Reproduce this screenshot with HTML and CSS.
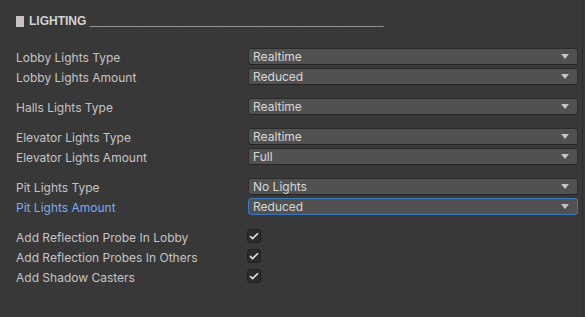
FILE: index.html
```html
<!DOCTYPE html>
<html>
<head>
    <title>Lighting</title>
    <link rel="stylesheet" href="styles.css">
</head>
<body>
    <div class="inspector">
        <div class="section-header">
            <span class="foldout"></span>
            <span class="section-title">LIGHTING ____________________________________________</span>
        </div>

        <div class="group">
            <div class="row">
                <label class="field-label">Lobby Lights Type</label>
                <div class="dropdown"><span>Realtime</span><span class="arrow"></span></div>
            </div>
            <div class="row">
                <label class="field-label">Lobby Lights Amount</label>
                <div class="dropdown"><span>Reduced</span><span class="arrow"></span></div>
            </div>
        </div>

        <div class="group">
            <div class="row">
                <label class="field-label">Halls Lights Type</label>
                <div class="dropdown"><span>Realtime</span><span class="arrow"></span></div>
            </div>
        </div>

        <div class="group">
            <div class="row">
                <label class="field-label">Elevator Lights Type</label>
                <div class="dropdown"><span>Realtime</span><span class="arrow"></span></div>
            </div>
            <div class="row">
                <label class="field-label">Elevator Lights Amount</label>
                <div class="dropdown"><span>Full</span><span class="arrow"></span></div>
            </div>
        </div>

        <div class="group">
            <div class="row">
                <label class="field-label">Pit Lights Type</label>
                <div class="dropdown"><span>No Lights</span><span class="arrow"></span></div>
            </div>
            <div class="row">
                <label class="field-label focused">Pit Lights Amount</label>
                <div class="dropdown focused"><span>Reduced</span><span class="arrow"></span></div>
            </div>
        </div>

        <div class="group">
            <div class="row">
                <label class="field-label">Add Reflection Probe In Lobby</label>
                <div class="checkbox">
                    <svg width="10" height="8" viewBox="0 0 10 8"><path d="M1 4.2 L3.6 6.6 L9 1.2" fill="none" stroke="#e4e4e4" stroke-width="1.6"/></svg>
                </div>
            </div>
            <div class="row">
                <label class="field-label">Add Reflection Probes In Others</label>
                <div class="checkbox">
                    <svg width="10" height="8" viewBox="0 0 10 8"><path d="M1 4.2 L3.6 6.6 L9 1.2" fill="none" stroke="#e4e4e4" stroke-width="1.6"/></svg>
                </div>
            </div>
            <div class="row">
                <label class="field-label">Add Shadow Casters</label>
                <div class="checkbox">
                    <svg width="10" height="8" viewBox="0 0 10 8"><path d="M1 4.2 L3.6 6.6 L9 1.2" fill="none" stroke="#e4e4e4" stroke-width="1.6"/></svg>
                </div>
            </div>
        </div>
    </div>
</body>
</html>
```

FILE: styles.css
```css
body {
    margin: 0;
    background-color: #383838;
    font-family: Inter, "Liberation Sans", sans-serif;
    font-size: 12px;
    color: #c4c4c4;
}
.inspector {
    height: 317px;
    box-sizing: border-box;
    padding: 15px 4px 0 16px;
    margin-right: 2px;
    border-right: 1px solid #2c2c2c;
}
.section-header {
    display: flex;
    align-items: center;
    height: 12px;
    margin-bottom: 20px;
}
.foldout {
    width: 8px;
    height: 11px;
    background-color: #c4c4c4;
    margin-right: 5px;
}
.section-title {
    font-family: "Liberation Sans", Arial, sans-serif;
    font-weight: bold;
    font-size: 12px;
    color: #d2d2d2;
    white-space: nowrap;
    line-height: 12px;
}
.group {
    margin-bottom: 10px;
}
.row {
    display: flex;
    align-items: center;
    height: 20px;
}
.field-label {
    width: 232px;
    flex-shrink: 0;
    white-space: nowrap;
}
.field-label.focused {
    color: #7caaf0;
}
.dropdown {
    flex: 1;
    height: 17px;
    box-sizing: border-box;
    display: flex;
    align-items: center;
    justify-content: space-between;
    padding: 0 8px 0 4px;
    background-color: #515151;
    border: 1px solid #2e2e2e;
    border-top-color: #2a2a2a;
    border-bottom-color: #242424;
    border-radius: 3px;
    color: #d8d8d8;
    margin-top: -2px;
}
.dropdown.focused {
    border-color: #3a79bb;
}
.arrow {
    width: 0;
    height: 0;
    border-left: 4px solid transparent;
    border-right: 4px solid transparent;
    border-top: 5px solid #c4c4c4;
}
.checkbox {
    width: 14px;
    height: 14px;
    box-sizing: border-box;
    margin-left: -1px;
    margin-top: -2px;
    background-color: #2b2b2b;
    border: 1px solid #1f1f1f;
    border-radius: 3px;
    display: flex;
    align-items: center;
    justify-content: center;
}
```
